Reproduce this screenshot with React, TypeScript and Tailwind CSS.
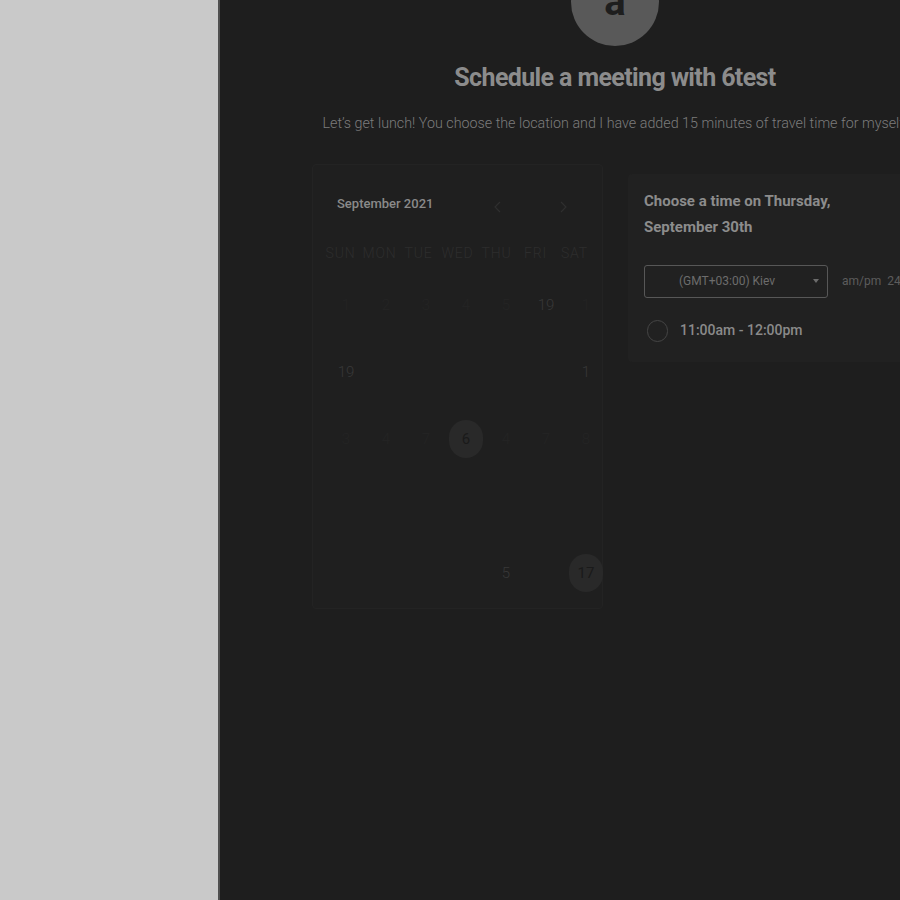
import React from 'react';

const weekdays = ['SUN', 'MON', 'TUE', 'WED', 'THU', 'FRI', 'SAT'];

// faint, mostly illegible day grid as seen in the capture
const rows: { label: string; tone?: 'dim' | 'mid' | 'sel' }[][] = [
  [{ label: '1' }, { label: '2' }, { label: '3' }, { label: '4' }, { label: '5' }, { label: '19', tone: 'mid' }, { label: '1' }],
  [{ label: '19', tone: 'mid' }, { label: '' }, { label: '' }, { label: '' }, { label: '' }, { label: '' }, { label: '1', tone: 'mid' }],
  [{ label: '3' }, { label: '4' }, { label: '7' }, { label: '6', tone: 'sel' }, { label: '4' }, { label: '7' }, { label: '8' }],
  [{ label: '' }, { label: '' }, { label: '' }, { label: '' }, { label: '' }, { label: '' }, { label: '' }],
  [{ label: '' }, { label: '' }, { label: '' }, { label: '' }, { label: '5', tone: 'mid' }, { label: '' }, { label: '17', tone: 'sel' }],
];

const DayCell = ({ label, tone }: { label: string; tone?: 'dim' | 'mid' | 'sel' }) => {
  if (tone === 'sel') {
    return (
      <div className="flex h-[67px] items-center justify-center">
        <span className="flex h-[38px] w-[34px] items-center justify-center rounded-full bg-[#292929] text-[15px] text-[#1a1a1a]">
          {label}
        </span>
      </div>
    );
  }
  return (
    <div className="flex h-[67px] items-center justify-center">
      <span className={tone === 'mid' ? 'text-[15px] font-light text-[#383838]' : 'text-[15px] font-light text-[#242424]'}>
        {label}
      </span>
    </div>
  );
};

export default function App() {
  return (
    <div className="flex h-[900px] w-[900px] overflow-hidden" style={{ fontFamily: 'Roboto, "Noto Sans", sans-serif' }}>
      <aside className="h-full w-[220px] shrink-0 border-r-2 border-[#4f4f4f] bg-[#c9c9c9]" />

      <main className="relative h-full flex-1 overflow-hidden bg-[#1e1e1e]">
        <div className="flex w-[790px] flex-col items-center">
          {/* Avatar */}
          <div className="mt-[-42px] flex h-[88px] w-[88px] items-center justify-center rounded-full bg-[#595959]">
            <span className="text-[40px] font-bold leading-none text-[#1e1e1e]">a</span>
          </div>

          <h1 className="mt-[13px] text-[25px] font-bold tracking-tight text-[#8c8c8c]">
            Schedule a meeting with 6test
          </h1>
          <p className="mt-[16px] whitespace-nowrap text-[14.3px] font-light text-[#7c7c7c]">
            Let’s get lunch! You choose the location and I have added 15 minutes of travel time for myself.
          </p>
        </div>

        <div className="mt-[30px] flex w-[790px] items-start">
          {/* Calendar */}
          <section className="ml-[92px] h-[445px] w-[291px] shrink-0 rounded-[4px] border border-[#232323] bg-[#1f1f1f] px-[13px] pt-[29px]">
            <div className="flex items-center">
              <span className="ml-[11px] text-[13px] font-medium text-[#8a8a8a]">September 2021</span>
              <div className="ml-auto mr-[21px] mt-[6px] flex items-center gap-[55px] text-[#2f2f2f]">
                <svg width="10" height="12" viewBox="0 0 10 12" fill="none" stroke="currentColor" strokeWidth="1.2">
                  <path d="M7 1 L2 6 L7 11" />
                </svg>
                <svg width="10" height="12" viewBox="0 0 10 12" fill="none" stroke="currentColor" strokeWidth="1.2">
                  <path d="M3 1 L8 6 L3 11" />
                </svg>
              </div>
            </div>

            <div className="ml-[-5px] mt-[30px] grid w-[273px] grid-cols-7">
              {weekdays.map((d) => (
                <span key={d} className="text-center text-[14px] font-light tracking-[0.06em] text-[#2d2d2d]">
                  {d}
                </span>
              ))}
            </div>

            <div className="mt-[7px] grid w-[280px] grid-cols-7">
              {rows.map((row, r) =>
                row.map((c, i) => <DayCell key={`${r}-${i}`} label={c.label} tone={c.tone} />)
              )}
            </div>
          </section>

          {/* Time picker */}
          <section className="ml-[25px] mt-[10px] h-[188px] w-[300px] shrink-0 rounded-[4px] bg-[#212121] pl-[16px] pt-[14px]">
            <h2 className="w-[220px] text-[15px] font-bold leading-[26px] text-[#8c8c8c]">
              Choose a time on Thursday, September 30th
            </h2>
            <div className="mt-[25px] flex items-center">
              <div className="relative flex h-[33px] w-[184px] items-center rounded-[3px] border border-[#575757] pl-[34px]">
                <span className="text-[12px] text-[#6c6c6c]">(GMT+03:00) Kiev</span>
                <span className="absolute right-[8px] top-[13px] h-0 w-0 border-x-[3px] border-t-[4px] border-x-transparent border-t-[#6c6c6c]" />
              </div>
              <span className="ml-[14px] whitespace-nowrap text-[12px] text-[#5c5c5c]">
                am/pm&nbsp;&nbsp;24h
              </span>
            </div>
            <div className="mt-[22px] flex items-center">
              <span className="ml-[3px] h-[22px] w-[21px] rounded-full border border-[#454545]" />
              <span className="ml-[12px] text-[14px] font-medium text-[#8a8a8a]">11:00am - 12:00pm</span>
            </div>
          </section>
        </div>
      </main>
    </div>
  );
}
